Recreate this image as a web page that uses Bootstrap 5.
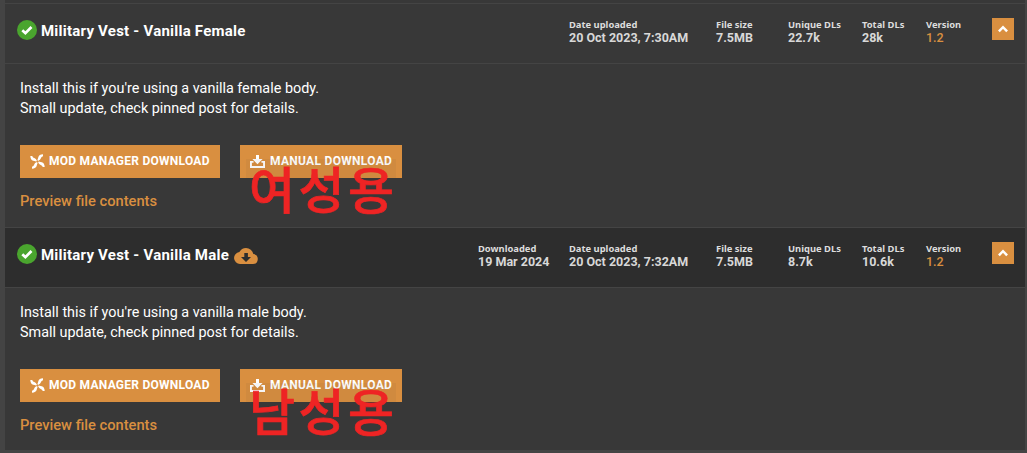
<!DOCTYPE html>
<html lang="en">
<head>
    <meta charset="UTF-8">
    <meta name="viewport" content="width=device-width, initial-scale=1.0">
    <title>Military Vest - Files</title>
    <link href="https://cdn.jsdelivr.net/npm/bootstrap@5.3.2/dist/css/bootstrap.min.css" rel="stylesheet">
    <style>
        body {
            background-color: #444;
            color: #fff;
            font-family: Roboto, "Noto Sans CJK KR", sans-serif;
            font-size: 14.4px;
            line-height: 20px;
            overflow: hidden;
        }
        .file-list {
            width: 1020px;
            margin-left: 5px;
            padding-top: 3px;
            background: #383838;
        }
        .file-head {
            height: 61px;
            border-top: 1px solid #444;
            border-bottom: 1px solid #444;
            padding: 0 11px 0 12px;
        }
        .file-head.downloaded { background: #2d2d2d; margin-top: 1px; }
        .file-title { font-size: 15px; font-weight: 700; letter-spacing: .23px; margin: 1px 5px 0 4px; line-height: 20px; }
        .file-name { padding-top: 16px; }
        .file-stats { padding-top: 14px; }
        .stat-label {
            font-family: "Noto Sans", sans-serif;
            font-size: 9.4px;
            font-weight: 700;
            line-height: 13px;
            color: #ddd;
        }
        .stat-value { font-size: 12.5px; font-weight: 700; line-height: 13px; color: #d8d8d8; }
        .stat-value.version { color: #d98f40; font-weight: 500; }
        .w-downloaded { width: 91px; }
        .w-date { width: 147px; }
        .w-size { width: 72px; }
        .w-unique { width: 74px; }
        .w-total { width: 64px; }
        .w-version { width: 66px; }
        .toggle-btn { width: 22px; height: 22px; background: #d98f40; border-radius: 0; }
        .file-body { height: 162px; padding: 15px 15px 0; }
        .file-body p { margin-bottom: 26px; }
        .dl-btn {
            height: 33px;
            padding: 0 9px 1px;
            border: 0;
            border-radius: 0;
            background: #d98f40;
            color: #fff;
            font-size: 12px;
            font-weight: 700;
            letter-spacing: .3px;
            white-space: nowrap;
        }
        .dl-btn:hover { background: #c87b28; color: #fff; }
        .dl-btn svg { margin-right: 5px; }
        .dl-mod { width: 200px; margin-right: 20px; }
        .dl-mod svg { margin: 1px 4px 0 1px; }
        .dl-mod { letter-spacing: .26px; }
        .dl-manual { width: 162px; padding-left: 10px; }
        .dl-manual svg { margin-top: 1px; }
        .preview-link { color: #d98f40; font-size: 14.7px; font-weight: 500; margin-top: 13px; text-decoration: none; }
        /* red note laid over the manual button */
        .gender-note {
            left: 6px;
            top: 14px;
            width: 150px;
            height: 68px;
            background: rgba(50, 50, 50, .05);
            color: #ee2424;
            font-family: "Noto Sans CJK KR", sans-serif;
            font-size: 50px;
            font-weight: 500;
            -webkit-text-stroke: .7px #ee2424;
            letter-spacing: 3.5px;
            padding-left: 3px;
            line-height: 56px;
            white-space: nowrap;
            pointer-events: none;
        }
        .gender-note.male { line-height: 53px; }
        svg { display: block; flex: none; }
    </style>
</head>
<body>
    <svg width="0" height="0" class="position-absolute">
        <symbol id="icon-check" viewBox="0 0 20 20">
            <circle cx="10" cy="10" r="10" fill="#4aa52e"/>
            <path d="M5.3 10.2l3.1 3 6.1-6.2" fill="none" stroke="#fff" stroke-width="2.7"/>
        </symbol>
        <symbol id="icon-up" viewBox="0 0 22 22">
            <path d="M6.9 13.3L11 9.2l4.1 4.1" fill="none" stroke="#fff" stroke-width="2.5"/>
        </symbol>
        <symbol id="icon-cloud" viewBox="0 0 24 16">
            <path fill="#d98f40" d="M19.35 6.04A7.49 7.49 0 0 0 12 0C9.11 0 6.6 1.64 5.35 4.04A6 6 0 0 0 6 16h13a5 5 0 0 0 .35-9.96z"/>
            <path fill="#2d2d2d" d="M10.3 5h3.6v4H17l-5 5-5-5h3.3z"/>
        </symbol>
        <!-- four curved blades round the centre -->
        <symbol id="icon-mod" viewBox="0 0 15 15">
            <g fill="#fff">
                <path id="blade" d="M13 .3L13 2.2Q11.2 2.9 10.9 4.3Q10.5 6.1 8 7L7.4 6Q8.1 4.4 8.3 3.2Q9 .5 13 .3z"/>
                <use href="#blade" transform="rotate(90 7.5 7.5)"/>
                <use href="#blade" transform="rotate(180 7.5 7.5)"/>
                <use href="#blade" transform="rotate(270 7.5 7.5)"/>
            </g>
        </symbol>
        <symbol id="icon-download" viewBox="0 0 15 13">
            <path fill="#fff" d="M6 0h3v4h3.6L7.5 9.2 2.4 4H6z"/>
            <path fill="none" stroke="#fff" stroke-width="1.9" d="M3.5 6.9H.95v5.1h13.1V6.9h-2.6"/>
        </symbol>
    </svg>

    <div class="file-list">
        <!-- Vanilla Female -->
        <div class="file-head d-flex justify-content-between">
            <div class="file-name d-flex align-items-start">
                <svg width="20" height="20"><use href="#icon-check"/></svg>
                <h2 class="file-title">Military Vest - Vanilla Female</h2>
            </div>
            <div class="file-stats d-flex align-items-start">
                <div class="w-date"><div class="stat-label">Date uploaded</div><div class="stat-value">20 Oct 2023, 7:30AM</div></div>
                <div class="w-size"><div class="stat-label">File size</div><div class="stat-value">7.5MB</div></div>
                <div class="w-unique"><div class="stat-label">Unique DLs</div><div class="stat-value">22.7k</div></div>
                <div class="w-total"><div class="stat-label">Total DLs</div><div class="stat-value">28k</div></div>
                <div class="w-version"><div class="stat-label">Version</div><div class="stat-value version">1.2</div></div>
                <button class="btn toggle-btn p-0 border-0" aria-label="Collapse"><svg width="22" height="22"><use href="#icon-up"/></svg></button>
            </div>
        </div>
        <div class="file-body">
            <p>Install this if you're using a vanilla female body.<br>Small update, check pinned post for details.</p>
            <div class="d-flex">
                <a class="btn dl-btn dl-mod d-flex align-items-center" href="#"><svg width="15" height="15"><use href="#icon-mod"/></svg>MOD MANAGER DOWNLOAD</a>
                <div class="position-relative">
                    <a class="btn dl-btn dl-manual d-flex align-items-center" href="#"><svg width="15" height="13"><use href="#icon-download"/></svg>MANUAL DOWNLOAD</a>
                    <div class="gender-note position-absolute" lang="ko">여성용</div>
                </div>
            </div>
            <a class="preview-link d-inline-block" href="#">Preview file contents</a>
        </div>

        <!-- Vanilla Male -->
        <div class="file-head downloaded d-flex justify-content-between">
            <div class="file-name d-flex align-items-start">
                <svg width="20" height="20"><use href="#icon-check"/></svg>
                <h2 class="file-title">Military Vest - Vanilla Male</h2>
                <svg class="mt-1" width="24" height="16"><use href="#icon-cloud"/></svg>
            </div>
            <div class="file-stats d-flex align-items-start">
                <div class="w-downloaded"><div class="stat-label">Downloaded</div><div class="stat-value">19 Mar 2024</div></div>
                <div class="w-date"><div class="stat-label">Date uploaded</div><div class="stat-value">20 Oct 2023, 7:32AM</div></div>
                <div class="w-size"><div class="stat-label">File size</div><div class="stat-value">7.5MB</div></div>
                <div class="w-unique"><div class="stat-label">Unique DLs</div><div class="stat-value">8.7k</div></div>
                <div class="w-total"><div class="stat-label">Total DLs</div><div class="stat-value">10.6k</div></div>
                <div class="w-version"><div class="stat-label">Version</div><div class="stat-value version">1.2</div></div>
                <button class="btn toggle-btn p-0 border-0" aria-label="Collapse"><svg width="22" height="22"><use href="#icon-up"/></svg></button>
            </div>
        </div>
        <div class="file-body">
            <p>Install this if you're using a vanilla male body.<br>Small update, check pinned post for details.</p>
            <div class="d-flex">
                <a class="btn dl-btn dl-mod d-flex align-items-center" href="#"><svg width="15" height="15"><use href="#icon-mod"/></svg>MOD MANAGER DOWNLOAD</a>
                <div class="position-relative">
                    <a class="btn dl-btn dl-manual d-flex align-items-center" href="#"><svg width="15" height="13"><use href="#icon-download"/></svg>MANUAL DOWNLOAD</a>
                    <div class="gender-note male position-absolute" lang="ko">남성용</div>
                </div>
            </div>
            <a class="preview-link d-inline-block" href="#">Preview file contents</a>
        </div>
    </div>

    <script src="https://cdn.jsdelivr.net/npm/bootstrap@5.3.2/dist/js/bootstrap.bundle.min.js"></script>
</body>
</html>
